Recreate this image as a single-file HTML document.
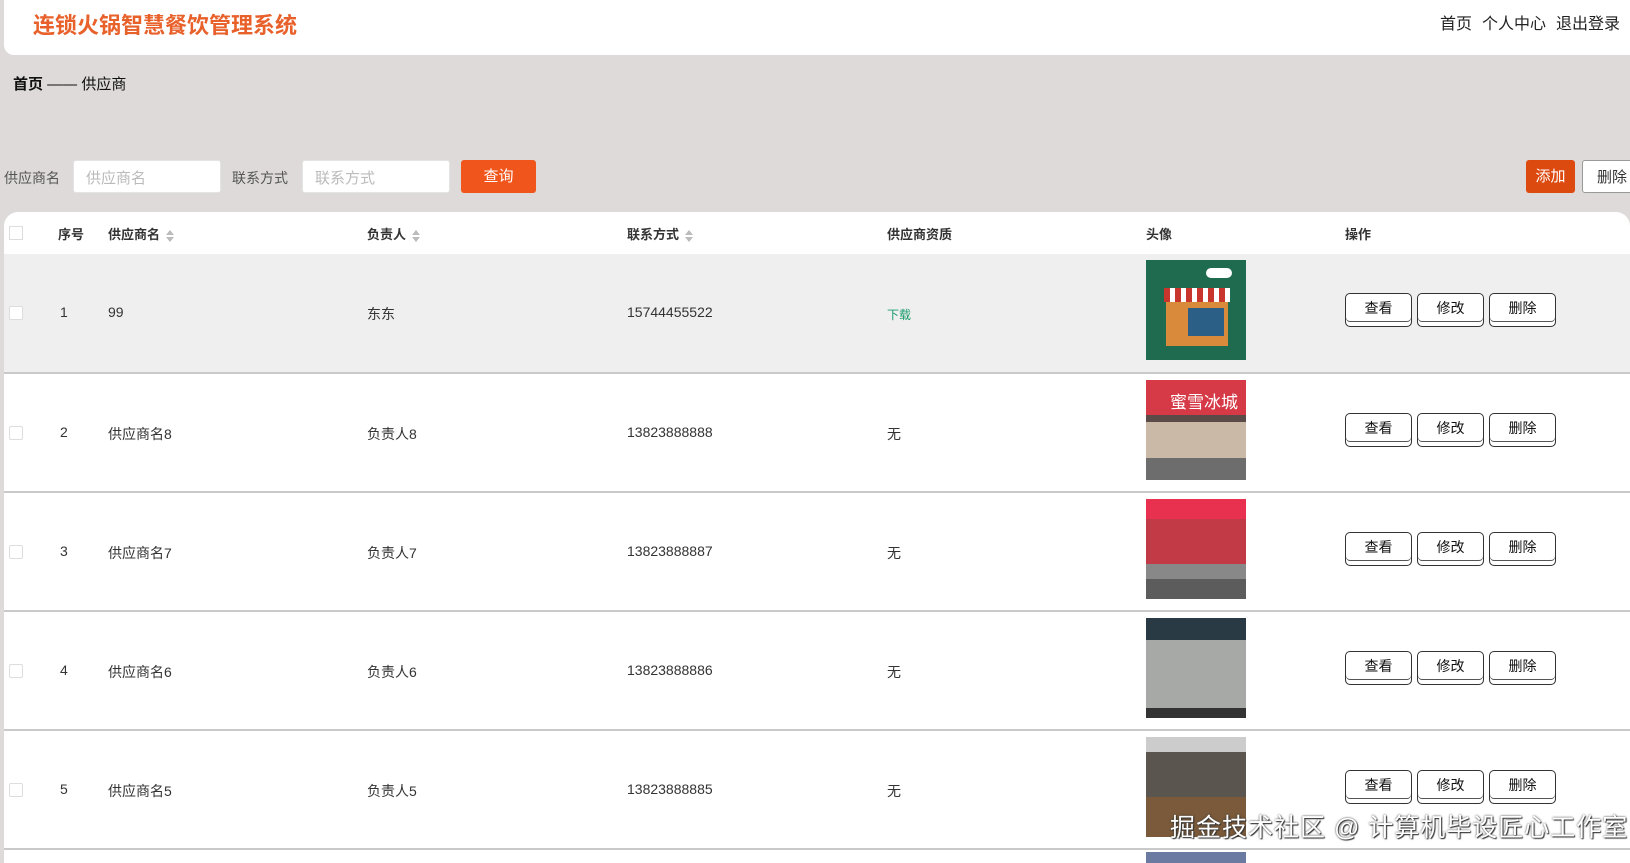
<!DOCTYPE html>
<html><head><meta charset="utf-8"><style>
*{margin:0;padding:0;box-sizing:border-box}
body{width:1630px;height:863px;overflow:hidden;background:#dedad9;font-family:"Liberation Sans","Noto Sans CJK SC",sans-serif;position:relative;color:#333}
.hdr{position:absolute;left:4px;top:0;width:1626px;height:55px;background:#fff;border-bottom-left-radius:10px}
.logo{position:absolute;left:29px;top:8px;font-size:22px;font-weight:bold;color:#e8602a}
.nav{position:absolute;right:10px;top:10px;font-size:16px;color:#222}
.nav span{margin-left:10px}
.bc{position:absolute;left:13px;top:73px;font-size:15px;color:#111}
.lbl{position:absolute;top:168px;font-size:14px;color:#555}
.inp{position:absolute;top:160px;width:148px;height:33px;background:#fff;border:1px solid #e4e4e4;border-radius:3px;font-size:15px;color:#bbb;padding:6px 12px}
.btn{position:absolute;height:33px;border-radius:3px;font-size:15px;text-align:center;line-height:33px}
.tbl{position:absolute;left:4px;top:212px;width:1626px;height:651px;background:#fff;border-top-left-radius:14px;border-top-right-radius:14px;overflow:hidden}
.th{position:absolute;top:12px;font-size:13px;font-weight:bold;color:#333}
.sort{display:inline-block;margin-left:6px;vertical-align:middle;width:8px;height:12px;position:relative}
.sort:before,.sort:after{content:"";position:absolute;left:0;border-left:4px solid transparent;border-right:4px solid transparent}
.sort:before{top:0;border-bottom:5px solid #bbb}.sort:after{bottom:0;border-top:5px solid #bbb}
.row{position:absolute;left:0;width:1626px;height:119px;border-bottom:2px solid #c9c9c9}
.c{position:absolute;top:50px;font-size:14px;color:#333}
.cb{position:absolute;left:5px;top:52px;width:14px;height:14px;border:1px solid #ddd;background:#fff;border-radius:2px}
.img{position:absolute;left:1142px;top:6px;width:100px;height:100px}
.ob{position:absolute;top:39px;width:67px;height:34px;border:1.5px solid #333;border-radius:5px;background:#fff;font-size:14px;text-align:center;line-height:28px;color:#111;box-shadow:inset 0 -4px 0 #fff,inset 0 -5px 0 #555}
.wm{position:absolute;left:1170px;top:808px;font-size:25px;color:#fff;text-shadow:0 0 2px #333,1px 1px 1px #333;letter-spacing:1px}
</style></head><body>
<div class="hdr"><div class="logo">连锁火锅智慧餐饮管理系统</div>
<div class="nav"><span>首页</span><span>个人中心</span><span>退出登录</span></div></div>
<div class="bc"><b>首页</b> —— 供应商</div>
<div class="lbl" style="left:4px">供应商名</div>
<div class="inp" style="left:73px">供应商名</div>
<div class="lbl" style="left:232px">联系方式</div>
<div class="inp" style="left:302px">联系方式</div>
<div class="btn" style="left:461px;top:160px;width:75px;background:#f0561c;color:#fff">查询</div>
<div class="btn" style="left:1526px;top:160px;width:49px;background:#dc4a10;color:#fff">添加</div>
<div class="btn" style="left:1582px;top:160px;width:60px;background:#fff;border:1px solid #999;color:#333">删除</div>
<div class="tbl">
<div style="position:absolute;left:5px;top:14px;width:14px;height:14px;border:1px solid #ddd"></div>
<div class="th" style="left:54px">序号</div>
<div class="th" style="left:104px">供应商名<i class="sort"></i></div>
<div class="th" style="left:363px">负责人<i class="sort"></i></div>
<div class="th" style="left:623px">联系方式<i class="sort"></i></div>
<div class="th" style="left:883px">供应商资质</div>
<div class="th" style="left:1142px">头像</div>
<div class="th" style="left:1341px">操作</div>

<div class="row" style="top:42px;background:#efefef;height:120px">
<div class="cb"></div><div class="c" style="left:56px">1</div><div class="c" style="left:104px">99</div><div class="c" style="left:363px">东东</div><div class="c" style="left:623px">15744455522</div><div class="c" style="left:883px;color:#1a9b6c;font-size:12px;top:52px">下载</div>
<div class="img" style="background:#1e6b4f"><div style="position:absolute;left:18px;top:28px;width:66px;height:14px;background:repeating-linear-gradient(90deg,#c8352d 0 6px,#fff 6px 11px)"></div><div style="position:absolute;left:20px;top:42px;width:62px;height:44px;background:#d98a3a"></div><div style="position:absolute;left:42px;top:48px;width:36px;height:28px;background:#2b5f86"></div><div style="position:absolute;left:60px;top:8px;width:26px;height:10px;background:#fff;border-radius:6px"></div></div>
<div class="ob" style="left:1341px">查看</div><div class="ob" style="left:1413px">修改</div><div class="ob" style="left:1485px">删除</div></div>

<div class="row" style="top:162px">
<div class="cb"></div><div class="c" style="left:56px">2</div><div class="c" style="left:104px">供应商名8</div><div class="c" style="left:363px">负责人8</div><div class="c" style="left:623px">13823888888</div><div class="c" style="left:883px">无</div>
<div class="img" style="background:linear-gradient(#d63a47 0 35%,#5a4b48 35% 42%,#cbb9a7 42% 78%,#6d6d6d 78%)"><div style="position:absolute;left:24px;top:8px;color:#fff;font-size:17px">蜜雪冰城</div></div>
<div class="ob" style="left:1341px">查看</div><div class="ob" style="left:1413px">修改</div><div class="ob" style="left:1485px">删除</div></div>

<div class="row" style="top:281px">
<div class="cb"></div><div class="c" style="left:56px">3</div><div class="c" style="left:104px">供应商名7</div><div class="c" style="left:363px">负责人7</div><div class="c" style="left:623px">13823888887</div><div class="c" style="left:883px">无</div>
<div class="img" style="background:linear-gradient(#e8304f 0 20%,#c23a46 20% 65%,#888 65% 80%,#5c5c5c 80%)"></div>
<div class="ob" style="left:1341px">查看</div><div class="ob" style="left:1413px">修改</div><div class="ob" style="left:1485px">删除</div></div>

<div class="row" style="top:400px">
<div class="cb"></div><div class="c" style="left:56px">4</div><div class="c" style="left:104px">供应商名6</div><div class="c" style="left:363px">负责人6</div><div class="c" style="left:623px">13823888886</div><div class="c" style="left:883px">无</div>
<div class="img" style="background:linear-gradient(#2a3a44 0 22%,#a7a9a6 22% 90%,#333 90%)"></div>
<div class="ob" style="left:1341px">查看</div><div class="ob" style="left:1413px">修改</div><div class="ob" style="left:1485px">删除</div></div>

<div class="row" style="top:519px">
<div class="cb"></div><div class="c" style="left:56px">5</div><div class="c" style="left:104px">供应商名5</div><div class="c" style="left:363px">负责人5</div><div class="c" style="left:623px">13823888885</div><div class="c" style="left:883px">无</div>
<div class="img" style="background:linear-gradient(#ccc 0 15%,#5b5550 15% 60%,#7a5a3a 60%)"></div>
<div class="ob" style="left:1341px">查看</div><div class="ob" style="left:1413px">修改</div><div class="ob" style="left:1485px">删除</div></div>
<div style="position:absolute;left:1142px;top:640px;width:100px;height:11px;background:#6a7aa0"></div>
</div>
<div class="wm">掘金技术社区 @ 计算机毕设匠心工作室</div>
</body></html>
